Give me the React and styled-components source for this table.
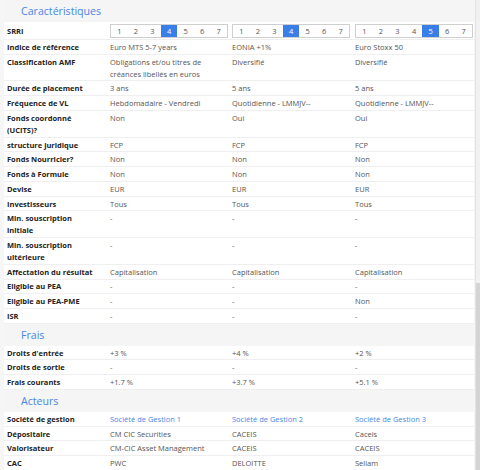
import React from "react";
import styled, { createGlobalStyle } from "styled-components";

const Global = createGlobalStyle`
  html, body { margin: 0; padding: 0; }
  body {
    background: #f6f6f6;
    font-family: "Open Sans", "Liberation Sans", sans-serif;
    width: 480px;
    height: 470px;
    overflow: hidden;
  }
`;

const Page = styled.div`
  display: flex;
  width: 480px;
  height: 470px;
  overflow: hidden;
`;

const Content = styled.div`
  flex: 1;
  padding-left: 4px;
  display: flex;
  flex-direction: column;
  min-width: 0;
`;

const Track = styled.div`
  width: 4px;
  margin-left: 1px;
  background: #f1f1f1;
  border-left: 1px solid #e2e2e2;
  display: flex;
  flex-direction: column;
  justify-content: flex-end;
`;

const Thumb = styled.div`
  height: 187px;
  background: #d4d4d4;
`;

const SectionTitle = styled.div`
  height: 22px;
  flex: none;
  display: flex;
  align-items: center;
  padding-left: 17px;
  background: #f5f5f5;
  color: #4a87e6;
  font-size: 10.6px;
  line-height: 22px;
`;

const Row = styled.div`
  display: grid;
  flex: none;
  grid-template-columns: 103px 122px 123px 1fr;
  background: #fff;
  border-bottom: 1px solid #efefef;
  font-size: 7.5px;
  line-height: 12px;
`;

const Label = styled.div`
  padding: ${(p) => p.$pad || "0.9px 3px 0.85px"};
  font-weight: 700;
  color: #222;
  white-space: nowrap;
`;

const Value = styled.div`
  padding: ${(p) => p.$pad || "0.9px 3px 0.85px"};
  color: ${(p) => (p.$link ? "#4a87e6" : "#555")};
  white-space: nowrap;
`;

const Scale = styled.div`
  display: flex;
  height: 14px;
  border: 1px solid #cfcfcf;
  box-sizing: border-box;
  width: 118px;
  background: #fff;
`;

const ScaleCell = styled.div`
  flex: 1;
  display: flex;
  align-items: center;
  justify-content: center;
  font-size: 7.5px;
  color: ${(p) => (p.$on ? "#fff" : "#555")};
  background: ${(p) => (p.$on ? "#3a7ee8" : "transparent")};
`;

const SRRI = ({ v }) => (
  <Scale>
    {[1, 2, 3, 4, 5, 6, 7].map((n) => (
      <ScaleCell key={n} $on={n === v}>
        {n}
      </ScaleCell>
    ))}
  </Scale>
);

const Lines = ({ t }) =>
  Array.isArray(t)
    ? t.map((s, i) => (
        <React.Fragment key={i}>
          {i > 0 && <br />}
          {s}
        </React.Fragment>
      ))
    : t;

const carac = [
  ["Indice de référence", "Euro MTS 5-7 years", "EONIA +1%", "Euro Stoxx 50"],
  [
    "Classification AMF",
    ["Obligations et/ou titres de", "créances libellés en euros"],
    "Diversifié",
    "Diversifié",
  ],
  ["Durée de placement", "3 ans", "5 ans", "5 ans"],
  ["Fréquence de VL", "Hebdomadaire - Vendredi", "Quotidienne - LMMJV--", "Quotidienne - LMMJV--"],
  [["Fonds coordonné", "(UCITS)?"], "Non", "Oui", "Oui"],
  ["structure juridique", "FCP", "FCP", "FCP"],
  ["Fonds Nourricier?", "Non", "Non", "Non"],
  ["Fonds à Formule", "Non", "Non", "Non"],
  ["Devise", "EUR", "EUR", "EUR"],
  ["Investisseurs", "Tous", "Tous", "Tous"],
  [["Min. souscription", "initiale"], "-", "-", "-"],
  [["Min. souscription", "ultérieure"], "-", "-", "-"],
  ["Affectation du résultat", "Capitalisation", "Capitalisation", "Capitalisation"],
  ["Eligible au PEA", "-", "-", "-"],
  ["Eligible au PEA-PME", "-", "-", "Non"],
  ["ISR", "-", "-", "-"],
];

const frais = [
  ["Droits d'entrée", "+3 %", "+4 %", "+2 %"],
  ["Droits de sortie", "-", "-", "-"],
  ["Frais courants", "+1.7 %", "+3.7 %", "+5.1 %"],
];

const acteurs = [
  ["Société de gestion", "Société de Gestion 1", "Société de Gestion 2", "Société de Gestion 3", true],
  ["Dépositaire", "CM CIC Securities", "CACEIS", "Caceis"],
  ["Valorisateur", "CM-CIC Asset Management", "CACEIS", "CACEIS"],
  ["CAC", "PWC", "DELOITTE", "Sellam"],
];

const DataRows = ({ rows }) =>
  rows.map(([label, a, b, c, link]) => (
    <Row key={Array.isArray(label) ? label.join(" ") : label}>
      <Label>
        <Lines t={label} />
      </Label>
      <Value $link={link}>
        <Lines t={a} />
      </Value>
      <Value $link={link}>
        <Lines t={b} />
      </Value>
      <Value $link={link}>
        <Lines t={c} />
      </Value>
    </Row>
  ));

export default function App() {
  return (
    <>
      <Global />
      <Page>
        <Content>
          <SectionTitle>Caractéristiques</SectionTitle>
          <Row>
            <Label $pad="3px 3px 1px">SRRI</Label>
            <Value $pad="2px 3px 1px">
              <SRRI v={4} />
            </Value>
            <Value $pad="2px 3px 1px">
              <SRRI v={4} />
            </Value>
            <Value $pad="2px 3px 1px">
              <SRRI v={5} />
            </Value>
          </Row>
          <DataRows rows={carac} />
          <SectionTitle>Frais</SectionTitle>
          <DataRows rows={frais} />
          <SectionTitle>Acteurs</SectionTitle>
          <DataRows rows={acteurs} />
        </Content>
        <Track>
          <Thumb />
        </Track>
      </Page>
    </>
  );
}
